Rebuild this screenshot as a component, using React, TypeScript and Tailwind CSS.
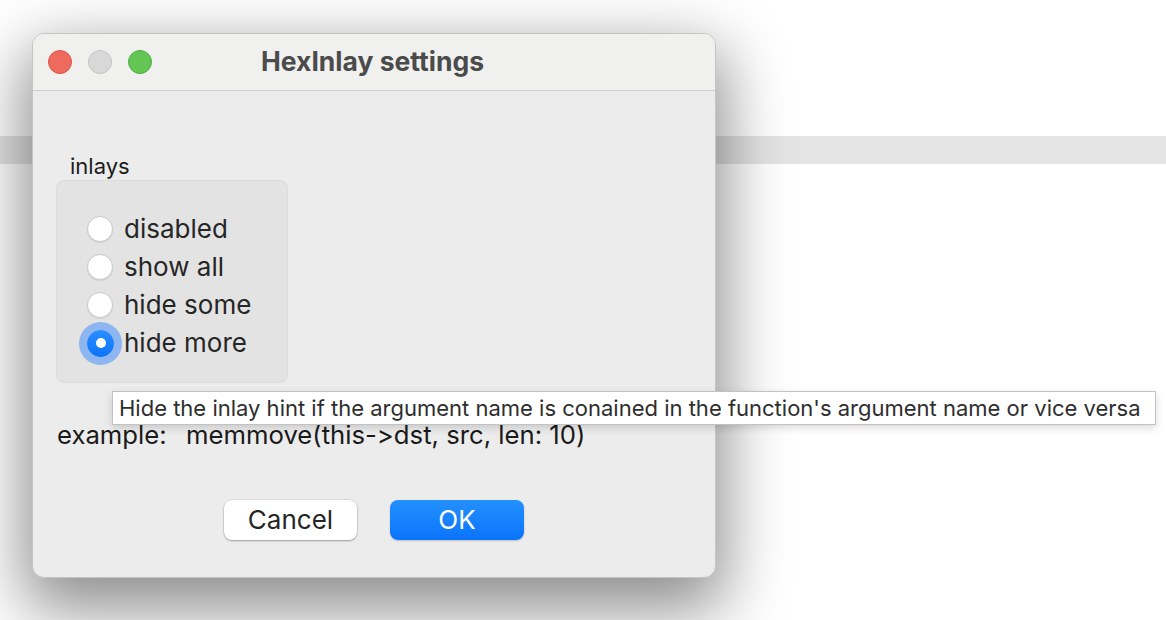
import React from 'react';

const font = { fontFamily: 'Inter, "Noto Sans", sans-serif' };

const options = ['disabled', 'show all', 'hide some', 'hide more'];

const Radio = ({ checked }: { checked: boolean }) =>
  checked ? (
    <span className="relative flex h-[27px] w-[27px] items-center justify-center rounded-full bg-gradient-to-b from-[#2a8dff] to-[#0a74fb] ring-[8px] ring-[#8db6f0]">
      <span className="h-[10px] w-[10px] rounded-full bg-white" />
    </span>
  ) : (
    <span className="h-[26px] w-[26px] rounded-full border border-[#c9c9c9] bg-white shadow-[0_1px_1px_rgba(0,0,0,0.08)]" />
  );

const App = () => {
  return (
    <div className="relative h-[620px] w-[1166px] overflow-hidden bg-white [font-feature-settings:'calt'_0,'liga'_0]" style={font}>
      <div className="mt-[136px] h-[28px] w-full bg-[#e4e4e4]" />

      {/* dialog window */}
      <div className="absolute left-[32px] top-[33px] flex h-[545px] w-[684px] flex-col overflow-hidden rounded-[12px] border border-[#c4c4c4] bg-[#ececec] shadow-[0_24px_64px_8px_rgba(0,0,0,0.45)]">
        <div className="relative flex h-[57px] shrink-0 items-center border-b border-[#cfcfcf] bg-[#f0f0ef]">
          <div className="flex items-center gap-[16px] pl-[15px]">
            <span className="h-[24px] w-[24px] rounded-full border border-[#dd5248] bg-[#ee6a5f]" />
            <span className="h-[24px] w-[24px] rounded-full border border-[#c4c4c4] bg-[#d8d8d8]" />
            <span className="h-[24px] w-[24px] rounded-full border border-[#4eae42] bg-[#62c554]" />
          </div>
          <div className="absolute inset-0 flex items-center justify-center pr-[3px] text-[26.5px] font-bold text-[#4b4b4b]">
            HexInlay settings
          </div>
        </div>

        <div className="flex flex-1 flex-col px-[23px] pt-[62px]">
          <div className="ml-[14px] text-[22px] leading-[26px] text-[#1c1c1c]">inlays</div>
          <div className="mt-[1px] flex h-[203px] w-[232px] flex-col rounded-[8px] border border-[#dcdcdc] bg-[#e3e3e3] pl-[30px] pt-[29px]">
            {options.map((o, i) => (
              <div key={o} className="flex h-[38px] items-center gap-[11px]">
                <Radio checked={i === 3} />
                <span className={`text-[26px] leading-[30px] text-[#262626] ${i === 3 ? '-ml-[1px]' : ''}`}>{o}</span>
              </div>
            ))}
          </div>

          <div className="mt-[37px] ml-[1px] flex text-[25.7px] leading-[30px] text-[#1a1a1a]">
            <span className="w-[129px]">example:</span>
            <span>memmove(this-&gt;dst, src, len: 10)</span>
          </div>

          <div className="mt-[50px] flex justify-center gap-[33px]">
            <button className="h-[40px] w-[133px] rounded-[8px] bg-white pb-[2px] text-[26px] text-[#262626] shadow-[0_1px_2px_rgba(0,0,0,0.3),0_0_0_0.5px_rgba(0,0,0,0.12)]">
              Cancel
            </button>
            <button className="h-[40px] w-[134px] rounded-[8px] bg-gradient-to-b from-[#2390ff] to-[#0a74fb] pb-[2px] text-[26px] text-white shadow-[0_1px_2px_rgba(0,0,0,0.2)]">
              OK
            </button>
          </div>
        </div>
      </div>

      {/* tooltip */}
      <div className="absolute left-[112px] top-[391px] flex h-[34px] w-[1044px] items-center border border-[#c2c2c2] bg-white pl-[6px] text-[22px] text-[#2e2e2e] shadow-[0_3px_8px_rgba(0,0,0,0.15)]">
        Hide the inlay hint if the argument name is conained in the function's argument name or vice versa
      </div>
    </div>
  );
};

export default App;
